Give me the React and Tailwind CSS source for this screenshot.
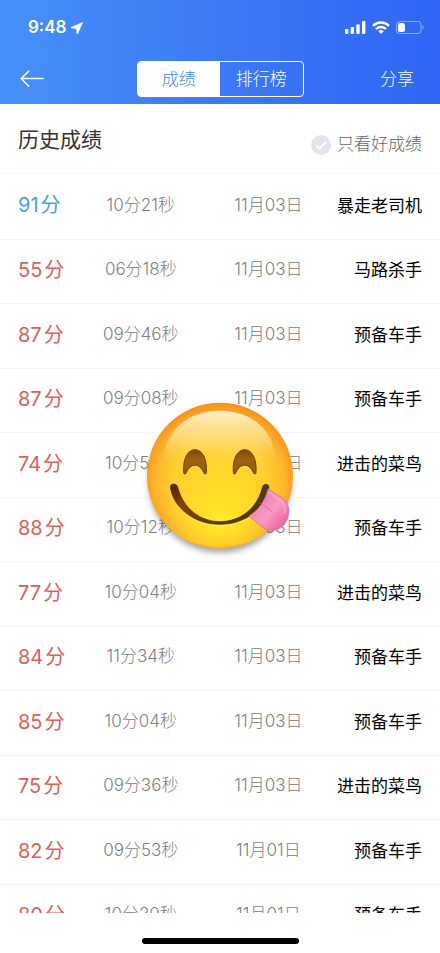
import { useState } from 'react';

const records = [
  { score: 91, time: '10分21秒', date: '11月03日', title: '暴走老司机' },
  { score: 55, time: '06分18秒', date: '11月03日', title: '马路杀手' },
  { score: 87, time: '09分46秒', date: '11月03日', title: '预备车手' },
  { score: 87, time: '09分08秒', date: '11月03日', title: '预备车手' },
  { score: 74, time: '10分55秒', date: '11月03日', title: '进击的菜鸟' },
  { score: 88, time: '10分12秒', date: '11月03日', title: '预备车手' },
  { score: 77, time: '10分04秒', date: '11月03日', title: '进击的菜鸟' },
  { score: 84, time: '11分34秒', date: '11月03日', title: '预备车手' },
  { score: 85, time: '10分04秒', date: '11月03日', title: '预备车手' },
  { score: 75, time: '09分36秒', date: '11月03日', title: '进击的菜鸟' },
  { score: 82, time: '09分53秒', date: '11月01日', title: '预备车手' },
  { score: 80, time: '10分30秒', date: '11月01日', title: '预备车手' },
];

export default function App() {
  const [onlyGood, setOnlyGood] = useState(false);
  const rows = onlyGood ? records.filter((r) => r.score >= 90) : records;

  return (
    <div className="flex h-screen flex-col bg-white font-['Inter','Noto_Sans_CJK_SC',sans-serif]">
      <header className="bg-linear-to-r from-[#4690f7] via-[#3d79f5] to-[#2f66f6] text-white">
        <StatusBar />
        <nav className="grid h-[50px] grid-cols-[1fr_auto_1fr] items-center px-5">
          <button type="button" aria-label="返回" className="justify-self-start">
            <BackArrow />
          </button>
          <div className="flex h-9 w-[167px] overflow-hidden rounded border border-white text-[17px] font-light">
            <button type="button" className="flex-1 bg-white pt-0.5 text-[#3f87ef]">成绩</button>
            <button type="button" className="flex-1 pt-0.5">排行榜</button>
          </div>
          <button type="button" className="justify-self-end pt-0.5 pr-1.5 text-[17px] font-light">分享</button>
        </nav>
      </header>

      <div className="flex h-[70px] shrink-0 justify-between border-b border-[#f8f8f8] px-[18px]">
        <h1 className="pt-5 text-[21px] leading-8 text-[#333]">历史成绩</h1>
        <label className="flex items-center gap-1.5 pt-3 text-[17px] font-light text-[#666]">
          <span className="relative flex">
            <input
              type="checkbox"
              checked={onlyGood}
              onChange={(e) => setOnlyGood(e.target.checked)}
              className="size-5 appearance-none rounded-full bg-[#e2e6ef] checked:bg-[#3f87ef]"
            />
            <svg viewBox="0 0 20 20" className="pointer-events-none absolute inset-0 size-5" fill="none" stroke="#fff" strokeWidth="2">
              <path d="M5.2 10.4l3.4 3.2 6.4-6.6" />
            </svg>
          </span>
          只看好成绩
        </label>
      </div>

      <main className="min-h-0 flex-1 overflow-hidden">
        <table className="w-full table-fixed border-collapse whitespace-nowrap">
          <colgroup>
            <col className="w-[18%]" />
            <col className="w-[28%]" />
            <col className="w-[30%]" />
            <col className="w-[24%]" />
          </colgroup>
          <tbody>
            {rows.map((r, i) => (
              <RecordRow key={i} {...r} />
            ))}
          </tbody>
        </table>
      </main>

      <footer className="flex h-10 shrink-0 items-end justify-center pb-[9px]">
        <div className="h-1.5 w-[157px] rounded-full bg-black" />
      </footer>

      <div className="pointer-events-none fixed inset-0 flex items-center justify-center">
        <YummyFace />
      </div>
    </div>
  );
}

function RecordRow({ score, time, date, title }) {
  return (
    <tr className="h-[65px] border-b border-[#f4f4f4] even:h-16">
      <td className={`pb-0.5 pl-[18px] text-xl ${score >= 90 ? 'text-[#4a9fe8]' : 'text-[#db605c]'}`}>
        {score}
        <span className="ml-0.5">分</span>
      </td>
      <td className="pb-0.5 text-center text-[17px] font-light text-[#808080]">{time}</td>
      <td className="pb-0.5 text-center text-[17px] font-light text-[#808080]">{date}</td>
      <td className="pr-[18px] text-right text-[17px] text-black">{title}</td>
    </tr>
  );
}

function StatusBar() {
  return (
    <div className="flex h-[54px] items-center justify-between pr-4 pl-7">
      <div className="flex items-center gap-1 pt-0.5">
        <span className="text-[17px] font-semibold">9:48</span>
        <svg viewBox="0 0 12 12" className="size-3" fill="#fff">
          <path d="M11.8.3L.2 5.2c-.5.3-.3 1 .3 1l5 .3.3 5.1c0 .6.7.7 1 .1z" stroke="#fff" strokeWidth=".4" strokeLinejoin="round" />
        </svg>
      </div>
      <div className="flex items-center gap-1.5">
        <svg viewBox="0 0 21 13" className="h-[13px] w-[21px]" fill="#fff">
          <rect x="0" y="8" width="3.4" height="5" rx="1" />
          <rect x="5.7" y="6" width="3.4" height="7" rx="1" />
          <rect x="11.3" y="3.2" width="3.4" height="9.8" rx="1" />
          <rect x="17" y="0" width="3.4" height="13" rx="1" />
        </svg>
        <svg viewBox="0 0 18 13" className="h-[13px] w-[18px]" fill="none" stroke="#fff" strokeWidth="2.4">
          <path d="M1 4.8a11.4 11.4 0 0 1 16 0" />
          <path d="M4 8a7.2 7.2 0 0 1 10 0" />
          <path d="M9 13L6.3 10.2a3.9 3.9 0 0 1 5.4 0z" fill="#fff" stroke="none" />
        </svg>
        <svg viewBox="0 0 28 13" className="h-[13px] w-7" fill="none">
          <rect x=".5" y=".5" width="24.5" height="12" rx="3" stroke="#fff" strokeOpacity=".45" />
          <rect x="2" y="2" width="7" height="9" rx="2" fill="#fff" />
          <path d="M26.5 4.4v4.2c1.5-.6 1.5-3.6 0-4.2z" fill="#fff" fillOpacity=".5" />
        </svg>
      </div>
    </div>
  );
}

function BackArrow() {
  return (
    <svg viewBox="0 0 24 18" className="h-[18px] w-6" fill="none" stroke="#fff" strokeWidth="1.4">
      <path d="M9.2.8L1.2 8.5l8 8.3M1.2 8.5h22.4" />
    </svg>
  );
}

function YummyFace() {
  return (
    <svg viewBox="0 3 540 514" className="w-[180px]">
      <defs>
        <radialGradient id="face" cx="270" cy="275" r="238" gradientUnits="userSpaceOnUse">
          <stop offset="0" stopColor="#ffd82a" />
          <stop offset=".6" stopColor="#ffcf2e" />
          <stop offset=".82" stopColor="#fdb52b" />
          <stop offset="1" stopColor="#f58e1c" />
        </radialGradient>
        <radialGradient id="glow" cx="270" cy="385" r="170" gradientUnits="userSpaceOnUse">
          <stop offset="0" stopColor="#fff028" stopOpacity=".9" />
          <stop offset="1" stopColor="#ffe026" stopOpacity="0" />
        </radialGradient>
        <linearGradient id="shine" x1="0" y1="62" x2="0" y2="235" gradientUnits="userSpaceOnUse">
          <stop offset="0" stopColor="#fff3cc" stopOpacity=".95" />
          <stop offset=".5" stopColor="#ffe59a" stopOpacity=".6" />
          <stop offset="1" stopColor="#ffd040" stopOpacity="0" />
        </linearGradient>
        <linearGradient id="eye" x1="0" y1="178" x2="0" y2="252" gradientUnits="userSpaceOnUse">
          <stop offset="0" stopColor="#7a4408" />
          <stop offset=".4" stopColor="#a0620f" />
          <stop offset="1" stopColor="#95570e" />
        </linearGradient>
        <linearGradient id="mouth" x1="120" y1="280" x2="270" y2="405" gradientUnits="userSpaceOnUse">
          <stop offset="0" stopColor="#43200a" />
          <stop offset=".35" stopColor="#8b3f06" />
          <stop offset="1" stopColor="#55380a" />
        </linearGradient>
        <linearGradient id="tongue" x1="375" y1="320" x2="470" y2="410" gradientUnits="userSpaceOnUse">
          <stop offset="0" stopColor="#ee78ab" />
          <stop offset=".5" stopColor="#fa9bc4" />
          <stop offset="1" stopColor="#e85a9b" />
        </linearGradient>
        <filter id="soft" x="-20%" y="-20%" width="140%" height="150%">
          <feGaussianBlur stdDeviation="9" />
        </filter>
      </defs>
      <circle cx="270" cy="273" r="214" fill="#000" opacity=".38" filter="url(#soft)" />
      <circle cx="270" cy="257" r="219" fill="url(#face)" />
      <ellipse cx="270" cy="345" rx="185" ry="125" fill="url(#glow)" />
      <path d="M102 205C106 120 176 62 270 62s162 58 166 143c1 18-40 30-166 30S101 223 102 205z" fill="url(#shine)" />
      <g fill="none" stroke="#ffed79" strokeWidth="3" opacity=".7">
        <path d="M160 252c4 7 9 5 12-1 12-26 34-26 46 0 3 6 8 8 12 1" />
        <path d="M309 252c4 7 9 5 12-1 12-26 34-26 46 0 3 6 8 8 12 1" />
        <path d="M125 308c22 60 76 100 145 100 40 0 72-14 98-36" />
      </g>
      <g fill="url(#eye)" stroke="#6b400c" strokeWidth="3">
        <path d="M161 247c-3-40 12-68 34-68s37 28 34 68c0 7-5 7-8 1-12-30-40-30-52 0-3 6-8 6-8-1z" />
        <path d="M310 247c-3-40 12-68 34-68s37 28 34 68c0 7-5 7-8 1-12-30-40-30-52 0-3 6-8 6-8-1z" />
      </g>
      <path d="M121 292c0-12 17-13 22-2 15 65 68 105 127 105s112-38 127-103c3-13 20-11 20 0-9 64-72 111-147 111S131 356 121 292z" fill="url(#mouth)" stroke="#432507" strokeWidth="2" />
      <path d="M414 296l43 29c17 12 24 35 17 57-9 29-33 43-58 38-20-4-34-22-59-42 30-19 48-44 57-82z" fill="url(#tongue)" stroke="#d9609a" strokeWidth="2" />
      <path d="M388 339c17 9 29 17 39 29" fill="none" stroke="#d4568f" strokeWidth="2" />
      <path d="M414 304l37 27c13 11 17 26 13 42" fill="none" stroke="#ffb3d3" strokeWidth="7" opacity=".5" />
    </svg>
  );
}
